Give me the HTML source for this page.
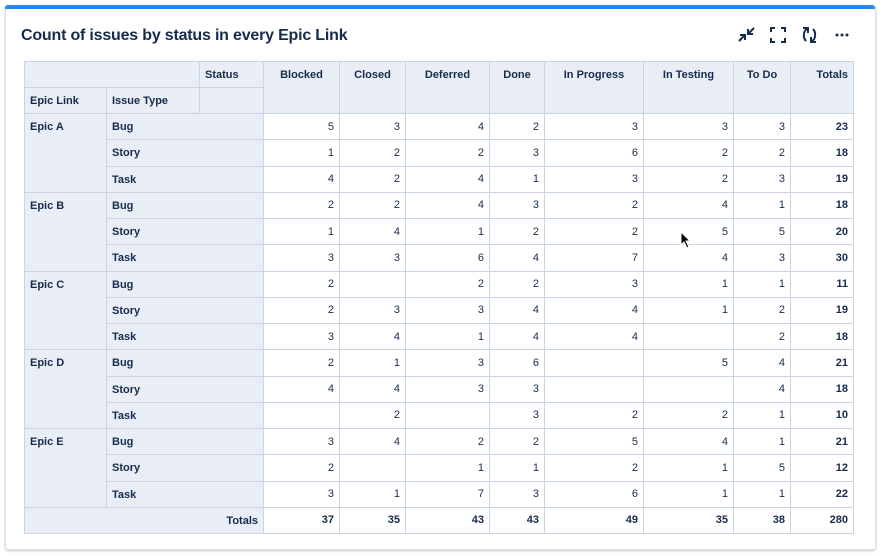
<!DOCTYPE html>
<html><head><style>
body{margin:0;background:#fff;width:883px;height:556px;position:relative;font-family:"Liberation Sans",sans-serif;color:#172b4d;overflow:hidden}
.card{position:absolute;left:5px;top:5px;width:869px;height:544px;border:1px solid #dfe1e6;border-top:none;border-radius:3px;box-shadow:0 1px 2px rgba(9,30,66,.25)}
.bar{position:absolute;left:5px;top:5px;width:870px;height:4px;background:#2684ff;border-radius:3px 3px 0 0}
h1{position:absolute;left:21px;top:27px;margin:0;font-size:16px;font-weight:bold;letter-spacing:-0.2px}
table{position:absolute;left:24px;top:61px;border-collapse:collapse;table-layout:fixed;font-size:11px}
td,th{border:1px solid #c9d4e4;padding:0 5px;height:26.25px;box-sizing:border-box}
tr.h th{height:26px}
th{background:#e9eef6;font-weight:bold;text-align:left;vertical-align:top;padding-top:7px}
td{text-align:right;vertical-align:middle}
.tot{font-weight:bold}
th.c{text-align:center}
th.r{text-align:right}
.ico{position:absolute;top:26px}
</style></head><body>
<div class="card"></div><div class="bar"></div>
<h1>Count of issues by status in every Epic Link</h1>
<svg class="ico" style="left:737px" width="20" height="18" viewBox="0 0 20 18" fill="none" stroke="#172b4d" stroke-width="2"><path d="M2 15 L8 9 M3 9 H8 V14 M17 2 L11 8 M11 3 V8 H16"/></svg>
<svg class="ico" style="left:769px" width="18" height="18" viewBox="0 0 18 18" fill="none" stroke="#172b4d" stroke-width="2"><path d="M2 6V2H6M12 2H16V6M16 12V16H12M6 16H2V12"/></svg>
<svg class="ico" style="left:800px" width="19" height="18" viewBox="0 0 19 18" fill="none" stroke="#172b4d" stroke-width="2"><path d="M7 3 C3 5 3 12 6 15 M3 2 H8 V7 M12 15 C16 13 16 6 13 3 M16 16 H11 V11"/></svg>
<svg class="ico" style="left:835px" width="14" height="18" viewBox="0 0 14 18" fill="#172b4d"><circle cx="2" cy="9" r="1.5"/><circle cx="7" cy="9" r="1.5"/><circle cx="12" cy="9" r="1.5"/></svg>
<table>
<colgroup><col style="width:82px"><col style="width:93px"><col style="width:64px"><col style="width:76px"><col style="width:66px"><col style="width:84px"><col style="width:55px"><col style="width:99px"><col style="width:90px"><col style="width:57px"><col style="width:63px"></colgroup>
<tr class="h"><th colspan="2"></th><th>Status</th><th class="c" rowspan="2">Blocked</th><th class="c" rowspan="2">Closed</th><th class="c" rowspan="2">Deferred</th><th class="c" rowspan="2">Done</th><th class="c" rowspan="2">In Progress</th><th class="c" rowspan="2">In Testing</th><th class="c" rowspan="2">To Do</th><th class="r" rowspan="2">Totals</th></tr>
<tr class="h"><th>Epic Link</th><th>Issue Type</th><th></th></tr>
<tr><th rowspan="3">Epic A</th><th colspan="2">Bug</th><td>5</td><td>3</td><td>4</td><td>2</td><td>3</td><td>3</td><td>3</td><td class="tot">23</td></tr>
<tr><th colspan="2">Story</th><td>1</td><td>2</td><td>2</td><td>3</td><td>6</td><td>2</td><td>2</td><td class="tot">18</td></tr>
<tr><th colspan="2">Task</th><td>4</td><td>2</td><td>4</td><td>1</td><td>3</td><td>2</td><td>3</td><td class="tot">19</td></tr>
<tr><th rowspan="3">Epic B</th><th colspan="2">Bug</th><td>2</td><td>2</td><td>4</td><td>3</td><td>2</td><td>4</td><td>1</td><td class="tot">18</td></tr>
<tr><th colspan="2">Story</th><td>1</td><td>4</td><td>1</td><td>2</td><td>2</td><td>5</td><td>5</td><td class="tot">20</td></tr>
<tr><th colspan="2">Task</th><td>3</td><td>3</td><td>6</td><td>4</td><td>7</td><td>4</td><td>3</td><td class="tot">30</td></tr>
<tr><th rowspan="3">Epic C</th><th colspan="2">Bug</th><td>2</td><td></td><td>2</td><td>2</td><td>3</td><td>1</td><td>1</td><td class="tot">11</td></tr>
<tr><th colspan="2">Story</th><td>2</td><td>3</td><td>3</td><td>4</td><td>4</td><td>1</td><td>2</td><td class="tot">19</td></tr>
<tr><th colspan="2">Task</th><td>3</td><td>4</td><td>1</td><td>4</td><td>4</td><td></td><td>2</td><td class="tot">18</td></tr>
<tr><th rowspan="3">Epic D</th><th colspan="2">Bug</th><td>2</td><td>1</td><td>3</td><td>6</td><td></td><td>5</td><td>4</td><td class="tot">21</td></tr>
<tr><th colspan="2">Story</th><td>4</td><td>4</td><td>3</td><td>3</td><td></td><td></td><td>4</td><td class="tot">18</td></tr>
<tr><th colspan="2">Task</th><td></td><td>2</td><td></td><td>3</td><td>2</td><td>2</td><td>1</td><td class="tot">10</td></tr>
<tr><th rowspan="3">Epic E</th><th colspan="2">Bug</th><td>3</td><td>4</td><td>2</td><td>2</td><td>5</td><td>4</td><td>1</td><td class="tot">21</td></tr>
<tr><th colspan="2">Story</th><td>2</td><td></td><td>1</td><td>1</td><td>2</td><td>1</td><td>5</td><td class="tot">12</td></tr>
<tr><th colspan="2">Task</th><td>3</td><td>1</td><td>7</td><td>3</td><td>6</td><td>1</td><td>1</td><td class="tot">22</td></tr>
<tr><th colspan="3" class="r">Totals</th><td class="tot">37</td><td class="tot">35</td><td class="tot">43</td><td class="tot">43</td><td class="tot">49</td><td class="tot">35</td><td class="tot">38</td><td class="tot">280</td></tr>
</table>
<svg style="position:absolute;left:680px;top:231px" width="12" height="18" viewBox="0 0 12 18"><path d="M1 1 V14 L4 11 L7 17 L9 16 L6 10 H10 Z" fill="#000" stroke="#fff" stroke-width="1"/></svg>
</body></html>
